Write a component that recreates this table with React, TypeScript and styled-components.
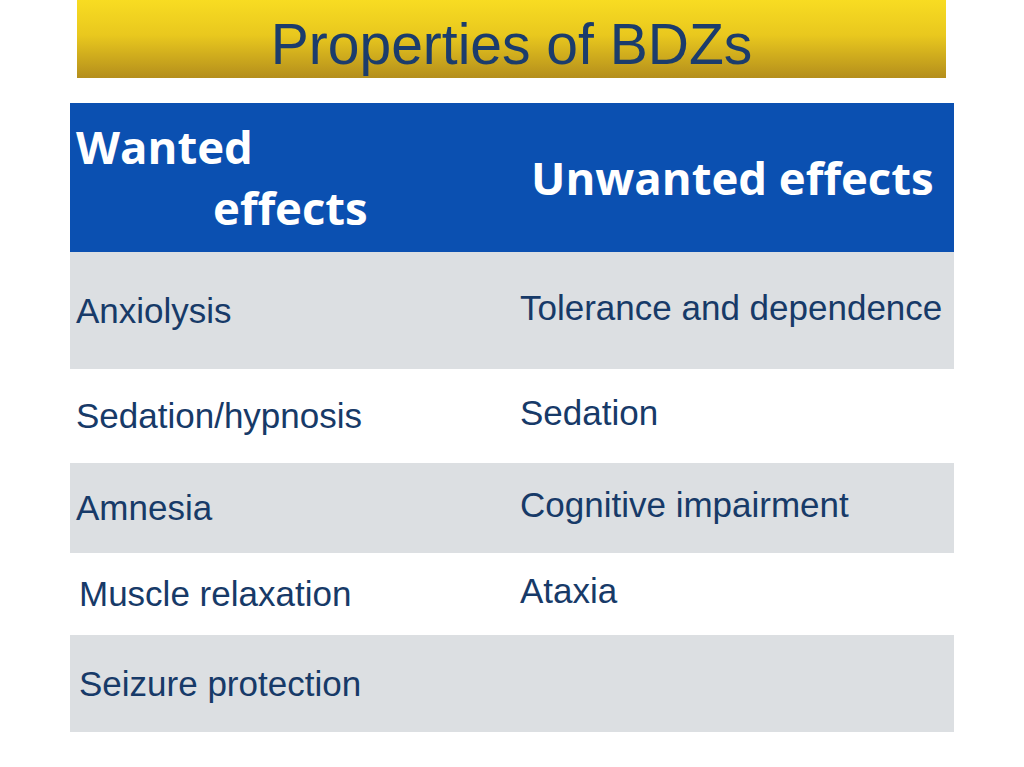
import React from 'react';
import styled, { createGlobalStyle } from 'styled-components';

const GlobalStyle = createGlobalStyle`
  html, body {
    margin: 0;
    padding: 0;
    background: #ffffff;
  }
`;

const Page = styled.div`
  width: 1024px;
  height: 767px;
  overflow: hidden;
  display: flex;
  flex-direction: column;
  font-family: "Liberation Sans", Arial, sans-serif;
`;

const TitleBar = styled.div`
  margin: 0 78px 0 77px;
  height: 78px;
  background: linear-gradient(to bottom, #f8dc22 0%, #e9c81e 45%, #b48e1c 100%);
  display: flex;
  align-items: center;
  justify-content: center;
`;

const Title = styled.h1`
  margin: 0;
  padding-top: 9px;
  font-family: "Liberation Sans", Arial, sans-serif;
  font-weight: normal;
  font-size: 57px;
  color: #1b3c6c;
`;

const Table = styled.div`
  margin: 25px 0 0 70px;
  width: 884px;
  display: flex;
  flex-direction: column;
`;

const Row = styled.div<{ $height: number; $shade?: boolean }>`
  display: grid;
  grid-template-columns: 444px 1fr;
  height: ${(p) => p.$height}px;
  background: ${(p) => (p.$shade ? '#dcdfe2' : '#ffffff')};
`;

const HeaderRow = styled.div`
  display: grid;
  grid-template-columns: 444px 1fr;
  height: 149px;
  background: #0b50b1;
  color: #ffffff;
  font-family: "Open Sans", "Noto Sans", sans-serif;
  font-weight: 700;
  font-size: 45.5px;
`;

const HeadLeft = styled.div`
  display: flex;
  flex-direction: column;
  padding: 13px 0 0 6px;
  line-height: 61px;
`;

const HeadLine = styled.span<{ $indent?: number }>`
  padding-left: ${(p) => p.$indent || 0}px;
  white-space: nowrap;
`;

const HeadRight = styled.div`
  display: flex;
  align-items: center;
  padding: 0 0 2px 17px;
  white-space: nowrap;
`;

const Cell = styled.div<{ $indent?: number; $lift?: number }>`
  display: flex;
  align-items: center;
  padding-left: ${(p) => p.$indent ?? 6}px;
  padding-bottom: ${(p) => p.$lift ?? 0}px;
  font-size: 35px;
  color: #173a68;
  white-space: nowrap;
`;

const rows = [
  { wanted: 'Anxiolysis', unwanted: 'Tolerance and dependence', h: 117, shade: true, indent: 6 },
  { wanted: 'Sedation/hypnosis', unwanted: 'Sedation', h: 94, shade: false, indent: 6 },
  { wanted: 'Amnesia', unwanted: 'Cognitive impairment', h: 90, shade: true, indent: 6 },
  { wanted: 'Muscle relaxation', unwanted: 'Ataxia', h: 82, shade: false, indent: 9 },
  { wanted: 'Seizure protection', unwanted: '', h: 97, shade: true, indent: 9 },
];

const App = () => {
  return (
    <>
      <GlobalStyle />
      <Page>
        <TitleBar>
          <Title>Properties of BDZs</Title>
        </TitleBar>
        <Table>
          <HeaderRow>
            <HeadLeft>
              <HeadLine>Wanted</HeadLine>
              <HeadLine $indent={137}>effects</HeadLine>
            </HeadLeft>
            <HeadRight>Unwanted effects</HeadRight>
          </HeaderRow>
          {rows.map((r) => (
            <Row key={r.wanted} $height={r.h} $shade={r.shade}>
              <Cell $indent={r.indent} $lift={0}>{r.wanted}</Cell>
              <Cell $indent={6} $lift={6}>{r.unwanted}</Cell>
            </Row>
          ))}
        </Table>
      </Page>
    </>
  );
};

export default App;
